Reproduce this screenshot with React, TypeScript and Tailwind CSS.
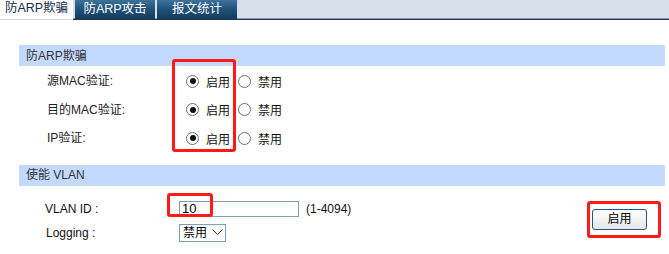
import { useState } from "react";

const font = "font-['Liberation_Sans','Noto_Sans_CJK_SC',sans-serif]";

function Radio({ checked }: { checked: boolean }) {
  return (
    <span className="w-[13px] h-[13px] rounded-full border border-[#6f6f6f] bg-white flex items-center justify-center shrink-0">
      {checked && <span className="w-[6px] h-[6px] rounded-full bg-[#111]" />}
    </span>
  );
}

function RadioRow({ label }: { label: string }) {
  return (
    <div className="flex items-center h-[28.5px]">
      <div className="w-[167px] pl-[28px] text-[12px] text-[#222]">{label}</div>
      <div className="flex items-center">
        <Radio checked />
        <span className="ml-[7px] mt-[3px] text-[12px] text-[#111]">启用</span>
      </div>
      <div className="flex items-center ml-[8px]">
        <Radio checked={false} />
        <span className="ml-[7px] mt-[3px] text-[12px] text-[#111]">禁用</span>
      </div>
    </div>
  );
}

function SectionHeader({ title }: { title: string }) {
  return (
    <div className="h-[21px] bg-[#c4d9fe] flex items-center pl-[7px] text-[12px] text-[#333]">
      {title}
    </div>
  );
}

export default function App() {
  const [tab] = useState(0);
  const tabs = ["防ARP欺骗", "防ARP攻击", "报文统计"];

  return (
    <div className={`relative w-[669px] h-[254px] bg-white overflow-hidden ${font}`}>
      {/* Tab bar */}
      <div className="relative h-[20px] bg-[#d7dfea] border-b border-[#1d3a52]">
        <div className="absolute left-0 right-0 bottom-0 h-px bg-[#8898aa]" />
        <div className="relative flex h-[19px]">
          {tabs.map((t, i) => (
            <div
              key={t}
              className={
                i === tab
                  ? "w-[73px] h-[20px] bg-white border-b border-[#d4d8de] flex items-center justify-center text-[12.5px] text-[#1a2a4a] pb-[2px]"
                  : "w-[80px] ml-[2px] h-[19px] bg-gradient-to-b from-[#3f7299] via-[#1f5178] to-[#123c5c] flex items-center justify-center text-[12.5px] text-white pb-[1px]"
              }
            >
              {t}
            </div>
          ))}
        </div>
      </div>

      {/* ARP section */}
      <div className="ml-[19px] mr-[4px] mt-[25px]">
        <SectionHeader title="防ARP欺骗" />
        <div className="pt-[1px]">
          <RadioRow label="源MAC验证:" />
          <RadioRow label="目的MAC验证:" />
          <RadioRow label="IP验证:" />
        </div>
      </div>

      {/* VLAN section */}
      <div className="ml-[19px] mr-[4px] mt-[12px]">
        <SectionHeader title="使能 VLAN" />
        <div className="flex">
          <div className="flex-1">
            <div className="flex items-center h-[24px] mt-[11px]">
              <div className="w-[160px] pl-[26px] text-[12px] text-[#111]">VLAN ID :</div>
              <div className="w-[120px] h-[16px] border border-[#7f9db9] flex items-center pl-[2px] text-[13px] text-black">
                10
              </div>
              <span className="ml-[7px] text-[12px] text-[#111]">(1-4094)</span>
            </div>
            <div className="flex items-center h-[24px]">
              <div className="w-[160px] pl-[27px] text-[12px] text-[#111]">Logging :</div>
              <div className="w-[47px] h-[18px] border border-[#7f9db9] flex items-center pl-[3px] text-[12px] text-black">
                禁用
                <svg className="ml-[5px]" width="11" height="7" viewBox="0 0 11 7">
                  <path d="M0.5 0.5 L5.5 5.5 L10.5 0.5" fill="none" stroke="#333" strokeWidth="1" />
                </svg>
              </div>
            </div>
          </div>
          <div className="w-[73px] pt-[23px]">
            <button className="w-[55px] h-[21px] rounded-[3px] border border-[#2a5580] bg-gradient-to-b from-white to-[#e6e6e6] text-[12px] text-black flex items-center justify-center">
              启用
            </button>
          </div>
        </div>
      </div>

      {/* Annotation boxes */}
      <div className="absolute left-[172px] top-[59px] w-[64px] h-[93px] border-[3px] border-[#ff1a1a] rounded-[3px]" />
      <div className="absolute left-[167px] top-[193px] w-[46px] h-[24px] border-[3px] border-[#ff1a1a] rounded-[3px]" />
      <div className="absolute left-[587px] top-[201px] w-[74px] h-[37px] border-[3px] border-[#ff1a1a] rounded-[3px]" />
    </div>
  );
}
